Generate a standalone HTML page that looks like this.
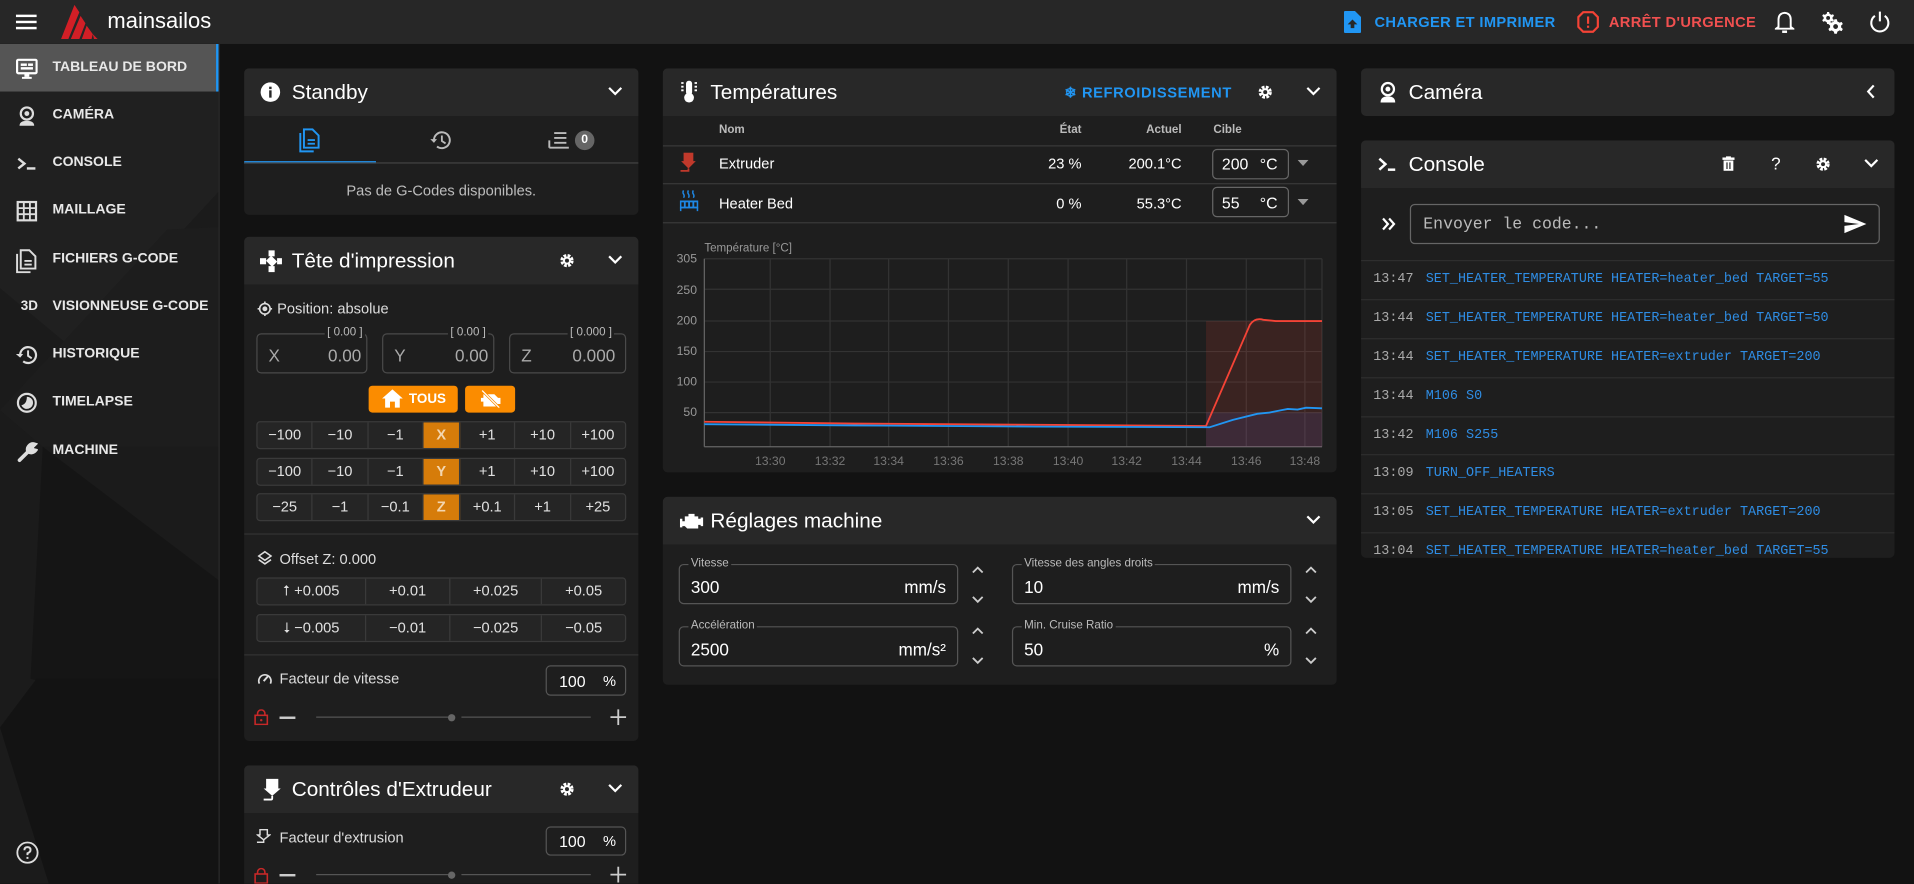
<!DOCTYPE html>
<html><head><meta charset="utf-8"><style>
*{box-sizing:border-box;margin:0;padding:0}
html,body{width:1914px;height:884px;overflow:hidden;background:#121212}
#w{position:absolute;left:0;top:0;width:1568px;height:724px;overflow:hidden;transform:scale(1.220663);transform-origin:0 0;font-family:"Liberation Sans",sans-serif;color:#fff;background:#121212}
.a{position:absolute}
.top{left:0;top:0;width:1568px;height:36px;background:#272727}
.side{left:0;top:36px;width:180px;height:688px;background:#1b1b1b;border-right:1px solid #2a2a2a;overflow:hidden}
.nav{position:absolute;left:0;width:177px;height:39px;font-size:11.5px;font-weight:bold;color:#e8e8e8;letter-spacing:0}
.nav span{position:absolute;left:43px;top:13px}
.nav svg{position:absolute;left:13px;top:11px}
.card{position:absolute;background:#1e1e1e;border-radius:4px;overflow:hidden}
.hd{position:absolute;left:0;top:0;right:0;height:39px;background:#282828}
.hd .t{position:absolute;left:39px;top:10px;font-size:17px}
.mut{color:#bdbdbd}
.fld{position:absolute;border:1px solid #555;border-radius:4px}
.grid{position:absolute;display:flex;border:1px solid #3a3a3a;border-radius:3px;overflow:hidden;background:#252525}
.grid div{flex:1;text-align:center;font-size:12px;line-height:20px;border-right:1px solid #3a3a3a;color:#e0e0e0}
.grid div:last-child{border-right:none}
.grid .o{background:#d67c0a;color:#f3d6b0;font-weight:bold;flex:0 0 30px}
.mono{font-family:"Liberation Mono",monospace}
.log{position:absolute;left:0;width:437px;height:32px;border-top:1px solid #2e2e2e;font-size:11px}
.log b{font-weight:normal;color:#aaa;position:absolute;left:10px;top:9px}
.log i{font-style:normal;color:#2f8de4;position:absolute;left:53px;top:9px}
.lbl{position:absolute;font-size:9.5px;color:#bbb;background:#1e1e1e;padding:0 2px}
</style></head><body><div id="w">
<!-- top bar -->
<div class="a top">
 <svg class="a" style="left:13px;top:11px" width="18" height="14"><rect y="1" width="17" height="2" fill="#fff"/><rect y="6" width="17" height="2" fill="#fff"/><rect y="11" width="17" height="2" fill="#fff"/></svg>
 <svg class="a" style="left:50px;top:4px" width="34" height="28"><polygon points="11,0 15,6 6,28 0,28" fill="#d21f26"/><polygon points="16,9 20,15 15,28 8,28" fill="#d21f26"/><polygon points="21,17 26,24 25,28 17,28" fill="#d21f26"/><polygon points="26,24 30,28 27,28" fill="#d21f26"/></svg>
 <div class="a" style="left:88px;top:7px;font-size:18px;color:#fff">mainsailos</div>
 <svg class="a" style="left:1101px;top:9px" width="14" height="18"><path d="M0 1Q0 0 1 0H9L14 5V17Q14 18 13 18H1Q0 18 0 17Z" fill="#2196f3"/><path d="M7 7L3 11H5.5V14H8.5V11H11Z" fill="#272727"/></svg>
 <div class="a" style="left:1126px;top:11px;font-size:12px;color:#2196f3;font-weight:bold;letter-spacing:.3px;white-space:nowrap">CHARGER ET IMPRIMER</div>
 <svg class="a" style="left:1292px;top:9px" width="18" height="18"><polygon points="5,1 13,1 17,5 17,13 13,17 5,17 1,13 1,5" fill="none" stroke="#f44336" stroke-width="1.8"/><rect x="8.1" y="4.5" width="1.8" height="6" fill="#f44336"/><rect x="8.1" y="12" width="1.8" height="1.8" fill="#f44336"/></svg>
 <div class="a" style="left:1318px;top:11px;font-size:12px;color:#f05050;font-weight:bold;letter-spacing:.3px;white-space:nowrap">ARRÊT D'URGENCE</div>
 <svg class="a" style="left:1454px;top:8px" width="16" height="20"><path d="M3 14V8Q3 3 8 2.5Q13 3 13 8V14L15 15.5H1Z" fill="none" stroke="#fff" stroke-width="1.6"/><rect x="6" y="17" width="4" height="2" fill="#fff"/></svg>
 <svg class="a" style="left:1492px;top:9px" width="20" height="19" viewBox="0 0 24 24"><path fill="#fff" d="M6.5 1L7 3Q8 3.3 8.7 4L10.6 3.4L11.6 5.1L10.1 6.5Q10.2 7.5 10.1 8L11.6 9.4L10.6 11.1L8.7 10.5Q8 11.2 7 11.5L6.5 13.5H4.5L4 11.5Q3 11.2 2.3 10.5L0.4 11.1L-0.6 9.4L0.9 8Q0.8 7 0.9 6.5L-0.6 5.1L0.4 3.4L2.3 4Q3 3.3 4 3L4.5 1ZM5.5 5.2A2 2 0 1 0 5.5 9.2A2 2 0 1 0 5.5 5.2Z" transform="translate(1 0)"/><path fill="#fff" d="M15.5 10L16.1 12.4Q17.3 12.8 18.2 13.6L20.5 12.9L21.7 15L19.9 16.7Q20.1 17.9 19.9 18.5L21.7 20.2L20.5 22.3L18.2 21.6Q17.3 22.4 16.1 22.8L15.5 25H13L12.4 22.8Q11.2 22.4 10.3 21.6L8 22.3L6.8 20.2L8.6 18.5Q8.4 17.3 8.6 16.7L6.8 15L8 12.9L10.3 13.6Q11.2 12.8 12.4 12.4L13 10ZM14.25 15.1A2.5 2.5 0 1 0 14.25 20.1A2.5 2.5 0 1 0 14.25 15.1Z" transform="translate(0 -1.5)"/></svg>
 <svg class="a" style="left:1531px;top:9px" width="18" height="18"><path d="M5 4A7 7 0 1 0 13 4" fill="none" stroke="#fff" stroke-width="1.7"/><rect x="8.2" y="0.5" width="1.7" height="8" fill="#fff"/></svg>
</div>
<!-- sidebar -->
<div class="a side">
 <svg class="a" style="left:0;top:0" width="180" height="688"><polygon points="0,0 180,0 180,120 60,250 0,200" fill="#202020"/><polygon points="0,300 137,152 180,150 180,330 35,330" fill="#1d1d1d"/><polygon points="35,330 180,440 180,560 25,520" fill="#151515"/><polygon points="0,560 30,520 180,520 180,688 40,688" fill="#131313"/></svg>
 <div class="nav" style="top:0;background:#555"><svg width="18" height="18"><rect x="1" y="2" width="16" height="11" rx="1" fill="none" stroke="#fff" stroke-width="1.8"/><rect x="4" y="5" width="5" height="2" fill="#fff"/><rect x="10" y="5" width="4" height="2" fill="#fff"/><rect x="4" y="8" width="10" height="2" fill="#fff"/><rect x="7" y="13" width="4" height="3" fill="#fff"/><rect x="5" y="16" width="8" height="1.6" fill="#fff"/></svg><span>TABLEAU DE BORD</span></div>
 <div class="a" style="left:177px;top:0;width:3px;height:39px;background:#2196f3"></div>
 <div class="nav" style="top:39px"><svg width="18" height="18"><circle cx="9" cy="7" r="5" fill="none" stroke="#ddd" stroke-width="1.8"/><circle cx="9" cy="7" r="2" fill="#ddd"/><path d="M3 17Q3 13 9 13Q15 13 15 17Z" fill="#ddd"/></svg><span>CAMÉRA</span></div>
 <div class="nav" style="top:78px"><svg width="18" height="18"><path d="M2 5L7 9L2 13" fill="none" stroke="#ddd" stroke-width="2"/><rect x="9" y="12" width="7" height="2" fill="#ddd"/></svg><span>CONSOLE</span></div>
 <div class="nav" style="top:117px"><svg width="18" height="18"><rect x="1.5" y="1.5" width="15" height="15" fill="none" stroke="#ddd" stroke-width="1.8"/><path d="M6.5 1.5V16.5M11.5 1.5V16.5M1.5 6.5H16.5M1.5 11.5H16.5" stroke="#ddd" stroke-width="1.5"/></svg><span>MAILLAGE</span></div>
 <div class="nav" style="top:157px"><svg width="18" height="20"><path d="M1 4V19H12" fill="none" stroke="#ddd" stroke-width="1.6"/><path d="M4 1H11L16 6V16H4Z" fill="none" stroke="#ddd" stroke-width="1.6"/><rect x="7" y="9" width="6" height="1.5" fill="#ddd"/><rect x="7" y="12" width="6" height="1.5" fill="#ddd"/></svg><span>FICHIERS G-CODE</span></div>
 <div class="nav" style="top:196px"><span style="left:17px;font-size:11px">3D</span><span>VISIONNEUSE G-CODE</span></div>
 <div class="nav" style="top:235px"><svg width="18" height="18"><path d="M3.5 9A6.5 6.5 0 1 1 6 14" fill="none" stroke="#ddd" stroke-width="1.8"/><path d="M0 8H6L3.5 11Z" fill="#ddd"/><path d="M10 5V9.5L13 11.5" fill="none" stroke="#ddd" stroke-width="1.6"/></svg><span>HISTORIQUE</span></div>
 <div class="nav" style="top:274px"><svg width="18" height="18"><circle cx="9" cy="9" r="7.3" fill="none" stroke="#ddd" stroke-width="1.8"/><path d="M9 4A5 5 0 1 1 4.5 11Q9 10 9 4Z" fill="#ddd"/></svg><span>TIMELAPSE</span></div>
 <div class="nav" style="top:314px"><svg width="18" height="18"><path d="M3 16L10 9M10 9A4.5 4.5 0 0 1 15.5 3L13 5.5L14 7.5L16 8A4.5 4.5 0 0 1 10 9" fill="#ddd" stroke="#ddd" stroke-width="3" stroke-linecap="round"/></svg><span>MACHINE</span></div>
 <svg class="a" style="left:13px;top:653px" width="19" height="19"><circle cx="9.5" cy="9.5" r="8.3" fill="none" stroke="#ddd" stroke-width="1.5"/><path d="M7 7.5Q7 5 9.5 5Q12 5 12 7.3Q12 9 9.5 10V11.5" fill="none" stroke="#ddd" stroke-width="1.6"/><rect x="8.7" y="13" width="1.6" height="1.6" fill="#ddd"/></svg>
</div>

<!-- Standby -->
<div class="card" style="left:200px;top:56px;width:323px;height:120px">
 <div class="hd"><svg class="a" style="left:13px;top:11px" width="17" height="17"><circle cx="8.5" cy="8.5" r="8" fill="#fff"/><rect x="7.5" y="7" width="2" height="6" fill="#282828"/><rect x="7.5" y="4" width="2" height="2" fill="#282828"/></svg><div class="t">Standby</div><svg class="a" style="left:298px;top:15px" width="12" height="8"><path d="M1 1L6 6L11 1" fill="none" stroke="#fff" stroke-width="1.8"/></svg></div>
 <svg class="a" style="left:45px;top:49px" width="18" height="20"><path d="M1 4V19H12" fill="none" stroke="#2196f3" stroke-width="1.6"/><path d="M4 1H11L16 6V16H4Z" fill="none" stroke="#2196f3" stroke-width="1.6"/><rect x="7" y="9" width="6" height="1.5" fill="#2196f3"/><rect x="7" y="12" width="6" height="1.5" fill="#2196f3"/></svg>
 <svg class="a" style="left:152px;top:50px" width="18" height="18"><path d="M3.5 9A6.5 6.5 0 1 1 6 14" fill="none" stroke="#bbb" stroke-width="1.6"/><path d="M0.5 8H6L3.5 11Z" fill="#bbb"/><path d="M10 5V9.5L13 11.5" fill="none" stroke="#bbb" stroke-width="1.5"/></svg>
 <svg class="a" style="left:249px;top:51px" width="18" height="16"><path d="M5 2H15M5 6H15M5 10H15M1 14H17" stroke="#bbb" stroke-width="1.6"/><path d="M1 8V14" stroke="#bbb" stroke-width="1.6"/></svg>
 <div class="a" style="left:271px;top:51px;width:16px;height:16px;border-radius:8px;background:#666;font-size:10px;font-weight:bold;text-align:center;line-height:16px">0</div>
 <div class="a" style="left:0;top:76px;width:108px;height:2px;background:#2196f3"></div>
 <div class="a" style="left:0;top:77px;width:323px;height:1px;background:#444"></div>
 <div class="a mut" style="left:0;top:93px;width:323px;text-align:center;font-size:12px">Pas de G-Codes disponibles.</div>
</div>

<!-- Tete -->
<div class="card" style="left:200px;top:194px;width:323px;height:413px">
 <div class="hd"><svg class="a" style="left:13px;top:11px" width="18" height="18"><rect x="7" y="0" width="5" height="5" fill="#fff"/><rect x="0" y="6.5" width="5" height="5" fill="#fff"/><rect x="14" y="6.5" width="4" height="5" fill="#fff"/><rect x="7" y="13" width="5" height="5" fill="#fff"/><rect x="6" y="6" width="7" height="6" fill="#fff" transform="rotate(45 9.5 9)"/></svg><div class="t">Tête d'impression</div>
 <svg class="a" style="left:258px;top:13px" width="13" height="13" viewBox="0 0 24 24"><circle cx="12" cy="12" r="7.5" fill="none" stroke="#fff" stroke-width="5" stroke-dasharray="4 2"/><circle cx="12" cy="12" r="6" fill="#fff"/><circle cx="12" cy="12" r="3" fill="#282828"/></svg>
 <svg class="a" style="left:298px;top:15px" width="12" height="8"><path d="M1 1L6 6L11 1" fill="none" stroke="#fff" stroke-width="1.8"/></svg></div>
 <svg class="a" style="left:11px;top:53px" width="12" height="12"><circle cx="6" cy="6" r="4.3" fill="none" stroke="#ddd" stroke-width="1.3"/><circle cx="6" cy="6" r="2" fill="#ddd"/><path d="M6 0V2M6 10V12M0 6H2M10 6H12" stroke="#ddd" stroke-width="1.3"/></svg>
 <div class="a" style="left:27px;top:52px;font-size:12px;color:#ddd">Position: absolue</div>
 <div class="fld" style="left:10px;top:79px;width:91px;height:33px;border-color:#4a4a4a"></div><div class="lbl" style="left:66px;top:73px">[ 0.00 ]</div><div class="a" style="left:20px;top:89px;font-size:14px;color:#aaa">X</div><div class="a" style="left:60px;top:89px;width:36px;text-align:right;font-size:14px;color:#aaa">0.00</div>
 <div class="fld" style="left:113px;top:79px;width:92px;height:33px;border-color:#4a4a4a"></div><div class="lbl" style="left:167px;top:73px">[ 0.00 ]</div><div class="a" style="left:123px;top:89px;font-size:14px;color:#aaa">Y</div><div class="a" style="left:160px;top:89px;width:40px;text-align:right;font-size:14px;color:#aaa">0.00</div>
 <div class="fld" style="left:217px;top:79px;width:96px;height:33px;border-color:#4a4a4a"></div><div class="lbl" style="left:265px;top:73px">[ 0.000 ]</div><div class="a" style="left:227px;top:89px;font-size:14px;color:#aaa">Z</div><div class="a" style="left:260px;top:89px;width:44px;text-align:right;font-size:14px;color:#aaa">0.000</div>
 <div class="a" style="left:102px;top:122px;width:73px;height:22px;background:#fb8c00;border-radius:3px"><svg class="a" style="left:11px;top:3px" width="17" height="15"><path d="M8.5 0L17 7.5H14.5V15H10.5V10H6.5V15H2.5V7.5H0Z" fill="#fff"/></svg><div class="a" style="left:33px;top:5px;font-size:11px;font-weight:bold">TOUS</div></div>
 <div class="a" style="left:181px;top:122px;width:41px;height:22px;background:#fb8c00;border-radius:3px"><svg class="a" style="left:12px;top:3px" width="18" height="15"><path d="M3 4H12L15 7H17V12H15L13 14H3V10H1V7H3Z" fill="#fff"/><path d="M2 1L16 15" stroke="#fb8c00" stroke-width="2.2"/><path d="M2 1L16 15" stroke="#fff" stroke-width="1"/></svg></div>
 <div class="grid" style="left:10px;top:151px;width:303px;height:23px"><div>−100</div><div>−10</div><div>−1</div><div class="o">X</div><div>+1</div><div>+10</div><div>+100</div></div>
 <div class="grid" style="left:10px;top:181px;width:303px;height:23px"><div>−100</div><div>−10</div><div>−1</div><div class="o">Y</div><div>+1</div><div>+10</div><div>+100</div></div>
 <div class="grid" style="left:10px;top:210px;width:303px;height:23px"><div>−25</div><div>−1</div><div>−0.1</div><div class="o">Z</div><div>+0.1</div><div>+1</div><div>+25</div></div>
 <div class="a" style="left:0;top:243px;width:323px;height:1px;background:#333"></div>
 <svg class="a" style="left:11px;top:257px" width="12" height="12"><path d="M6 1L11 4.5L6 8L1 4.5Z" fill="none" stroke="#ddd" stroke-width="1.3"/><path d="M1 7.5L6 11L11 7.5" fill="none" stroke="#ddd" stroke-width="1.3"/></svg>
 <div class="a" style="left:29px;top:257px;font-size:12px;color:#ddd">Offset Z: 0.000</div>
 <div class="grid" style="left:10px;top:279px;width:303px;height:23px"><div style="flex:1.3">⭡ +0.005</div><div>+0.01</div><div style="flex:1.1">+0.025</div><div>+0.05</div></div>
 <div class="grid" style="left:10px;top:309px;width:303px;height:23px"><div style="flex:1.3">⭣ −0.005</div><div>−0.01</div><div style="flex:1.1">−0.025</div><div>−0.05</div></div>
 <div class="a" style="left:0;top:342px;width:323px;height:1px;background:#333"></div>
 <svg class="a" style="left:11px;top:356px" width="12" height="11"><path d="M1.5 10A5 5 0 1 1 10.5 10" fill="none" stroke="#ddd" stroke-width="1.4"/><path d="M5 8L8.5 4" stroke="#ddd" stroke-width="1.6"/></svg>
 <div class="a" style="left:29px;top:355px;font-size:12px;color:#ddd">Facteur de vitesse</div>
 <div class="fld" style="left:247px;top:351px;width:66px;height:25px"></div><div class="a" style="left:258px;top:357px;font-size:13px">100</div><div class="a" style="left:294px;top:357px;font-size:12px">%</div>
 <svg class="a" style="left:8px;top:387px" width="12" height="13"><rect x="1" y="5" width="10" height="7.5" fill="none" stroke="#c62828" stroke-width="1.3"/><path d="M3 5V3.5A3 3 0 0 1 9 3.5V5" fill="none" stroke="#c62828" stroke-width="1.3"/><circle cx="6" cy="9" r="1" fill="#c62828"/></svg>
 <div class="a" style="left:29px;top:393px;width:13px;height:1.6px;background:#ccc"></div>
 <div class="a" style="left:59px;top:393px;width:108px;height:1.4px;background:#555"></div><div class="a" style="left:167px;top:391px;width:6px;height:6px;border-radius:3px;background:#666"></div><div class="a" style="left:178px;top:393px;width:106px;height:1.4px;background:#555"></div>
 <svg class="a" style="left:300px;top:387px" width="13" height="13"><path d="M6.5 0V13M0 6.5H13" stroke="#ccc" stroke-width="1.5"/></svg>
</div>

<!-- Extrudeur -->
<div class="card" style="left:200px;top:627px;width:323px;height:110px">
 <div class="hd"><svg class="a" style="left:15px;top:11px" width="16" height="19"><path d="M3 0H13V8H15L8 14L1 8H3Z" fill="#fff"/><path d="M8 14V16Q8 17 7 17H1" fill="none" stroke="#fff" stroke-width="1.5"/></svg><div class="t">Contrôles d'Extrudeur</div>
 <svg class="a" style="left:258px;top:13px" width="13" height="13" viewBox="0 0 24 24"><circle cx="12" cy="12" r="7.5" fill="none" stroke="#fff" stroke-width="5" stroke-dasharray="4 2"/><circle cx="12" cy="12" r="6" fill="#fff"/><circle cx="12" cy="12" r="3" fill="#282828"/></svg>
 <svg class="a" style="left:298px;top:15px" width="12" height="8"><path d="M1 1L6 6L11 1" fill="none" stroke="#fff" stroke-width="1.8"/></svg></div>
 <svg class="a" style="left:10px;top:52px" width="12" height="14"><path d="M3 0.7H9V5H11L6 9L1 5H3Z" fill="none" stroke="#ddd" stroke-width="1.2"/><path d="M6 9V11H0.5" fill="none" stroke="#ddd" stroke-width="1.2"/></svg>
 <div class="a" style="left:29px;top:52px;font-size:12px;color:#ddd">Facteur d'extrusion</div>
 <div class="fld" style="left:247px;top:50px;width:66px;height:24px"></div><div class="a" style="left:258px;top:55px;font-size:13px">100</div><div class="a" style="left:294px;top:55px;font-size:12px">%</div>
 <svg class="a" style="left:8px;top:84px" width="12" height="13"><rect x="1" y="5" width="10" height="7.5" fill="none" stroke="#c62828" stroke-width="1.3"/><path d="M3 5V3.5A3 3 0 0 1 9 3.5V5" fill="none" stroke="#c62828" stroke-width="1.3"/></svg>
 <div class="a" style="left:29px;top:89px;width:13px;height:1.6px;background:#ccc"></div>
 <div class="a" style="left:59px;top:89px;width:108px;height:1.4px;background:#555"></div><div class="a" style="left:167px;top:87px;width:6px;height:6px;border-radius:3px;background:#666"></div><div class="a" style="left:178px;top:89px;width:106px;height:1.4px;background:#555"></div>
 <svg class="a" style="left:300px;top:83px" width="13" height="13"><path d="M6.5 0V13M0 6.5H13" stroke="#ccc" stroke-width="1.5"/></svg>
</div>

<!-- Temperatures -->
<div class="card" style="left:543px;top:56px;width:552px;height:331px">
 <div class="hd"><svg class="a" style="left:15px;top:10px" width="16" height="19"><rect x="4" y="0" width="5" height="12" rx="2.5" fill="#fff"/><circle cx="6.5" cy="14" r="4" fill="#fff"/><path d="M0 2H2M0 5H2M0 8H2M11 2H13M11 5H13M11 8H13" stroke="#fff" stroke-width="1.5"/></svg><div class="t">Températures</div>
 <div class="a" style="left:329px;top:13px;font-size:12px;color:#2196f3;font-weight:bold;letter-spacing:.5px;white-space:nowrap">❄ REFROIDISSEMENT</div>
 <svg class="a" style="left:487px;top:13px" width="13" height="13" viewBox="0 0 24 24"><circle cx="12" cy="12" r="7.5" fill="none" stroke="#fff" stroke-width="5" stroke-dasharray="4 2"/><circle cx="12" cy="12" r="6" fill="#fff"/><circle cx="12" cy="12" r="3" fill="#282828"/></svg>
 <svg class="a" style="left:527px;top:15px" width="12" height="8"><path d="M1 1L6 6L11 1" fill="none" stroke="#fff" stroke-width="1.8"/></svg></div>
 <div class="a" style="left:46px;top:45px;font-size:9.5px;font-weight:bold;color:#bbb">Nom</div>
 <div class="a" style="left:300px;top:45px;width:43px;text-align:right;font-size:9.5px;font-weight:bold;color:#bbb">État</div>
 <div class="a" style="left:380px;top:45px;width:45px;text-align:right;font-size:9.5px;font-weight:bold;color:#bbb">Actuel</div>
 <div class="a" style="left:451px;top:45px;font-size:9.5px;font-weight:bold;color:#bbb">Cible</div>
 <div class="a" style="left:0;top:63px;width:552px;height:1px;background:#3a3a3a"></div>
 <svg class="a" style="left:14px;top:69px" width="14" height="19"><path d="M3 0H11V7H13L7 13L1 7H3Z" fill="#c0392b"/><path d="M7 13V15H0.5" fill="none" stroke="#c0392b" stroke-width="1.5"/></svg>
 <div class="a" style="left:46px;top:71px;font-size:12px">Extruder</div>
 <div class="a" style="left:300px;top:71px;width:43px;text-align:right;font-size:12px">23 %</div>
 <div class="a" style="left:370px;top:71px;width:55px;text-align:right;font-size:12px">200.1°C</div>
 <div class="fld" style="left:450px;top:66px;width:63px;height:25px;border-color:#666"></div><div class="a" style="left:458px;top:71px;font-size:13px">200</div><div class="a" style="left:489px;top:71px;font-size:13px">°C</div>
 <svg class="a" style="left:520px;top:75px" width="9" height="5"><path d="M0 0H9L4.5 5Z" fill="#999"/></svg>
 <div class="a" style="left:0;top:94px;width:552px;height:1px;background:#3a3a3a"></div>
 <svg class="a" style="left:14px;top:99px" width="15" height="19"><path d="M3 1Q2 2.5 3 4Q4 5.5 3 7M7 1Q6 2.5 7 4Q8 5.5 7 7M11 1Q10 2.5 11 4Q12 5.5 11 7" fill="none" stroke="#1e88e5" stroke-width="1.2"/><rect x="0.5" y="10" width="14" height="5" fill="none" stroke="#1e88e5" stroke-width="1.5"/><path d="M4 10V15M7.5 10V15M11 10V15M0.5 15V18M14.5 15V18" stroke="#1e88e5" stroke-width="1.5"/></svg>
 <div class="a" style="left:46px;top:104px;font-size:12px">Heater Bed</div>
 <div class="a" style="left:300px;top:104px;width:43px;text-align:right;font-size:12px">0 %</div>
 <div class="a" style="left:370px;top:104px;width:55px;text-align:right;font-size:12px">55.3°C</div>
 <div class="fld" style="left:450px;top:97px;width:63px;height:25px;border-color:#666"></div><div class="a" style="left:458px;top:103px;font-size:13px">55</div><div class="a" style="left:489px;top:103px;font-size:13px">°C</div>
 <svg class="a" style="left:520px;top:107px" width="9" height="5"><path d="M0 0H9L4.5 5Z" fill="#999"/></svg>
 <div class="a" style="left:0;top:126px;width:552px;height:1px;background:#3a3a3a"></div>
 <svg class="a" style="left:0;top:127px" width="552" height="204" font-family="Liberation Sans" font-size="10" fill="#999">
  <g transform="translate(-543,-183)">
  <text x="577" y="206" font-size="9.5" fill="#999">Température [°C]</text>
  <g stroke="#333" stroke-width="1">
   <line x1="577" y1="212" x2="1083" y2="212"/><line x1="577" y1="237" x2="1083" y2="237"/><line x1="577" y1="263" x2="1083" y2="263"/><line x1="577" y1="288" x2="1083" y2="288"/><line x1="577" y1="313" x2="1083" y2="313"/><line x1="577" y1="338" x2="1083" y2="338"/>
   <line x1="631" y1="212" x2="631" y2="366"/><line x1="680" y1="212" x2="680" y2="366"/><line x1="728" y1="212" x2="728" y2="366"/><line x1="777" y1="212" x2="777" y2="366"/><line x1="826" y1="212" x2="826" y2="366"/><line x1="875" y1="212" x2="875" y2="366"/><line x1="923" y1="212" x2="923" y2="366"/><line x1="972" y1="212" x2="972" y2="366"/><line x1="1021" y1="212" x2="1021" y2="366"/><line x1="1069" y1="212" x2="1069" y2="366"/><line x1="1083" y1="212" x2="1083" y2="366"/>
  </g>
  <line x1="577" y1="212" x2="577" y2="366" stroke="#666"/><line x1="577" y1="366" x2="1083" y2="366" stroke="#666"/>
  <rect x="988" y="263" width="95" height="103" fill="#f44336" fill-opacity="0.13"/>
  <rect x="988" y="338" width="95" height="28" fill="#5a6cff" fill-opacity="0.1"/>
  <g text-anchor="end" font-size="10" fill="#999"><text x="571" y="215">305</text><text x="571" y="241">250</text><text x="571" y="266">200</text><text x="571" y="291">150</text><text x="571" y="316">100</text><text x="571" y="341">50</text></g>
  <g text-anchor="middle" font-size="10" fill="#777"><text x="631" y="381">13:30</text><text x="680" y="381">13:32</text><text x="728" y="381">13:34</text><text x="777" y="381">13:36</text><text x="826" y="381">13:38</text><text x="875" y="381">13:40</text><text x="923" y="381">13:42</text><text x="972" y="381">13:44</text><text x="1021" y="381">13:46</text><text x="1069" y="381">13:48</text></g>
  <path d="M577 345.5L700 347L850 348L988 349L1024 266Q1028 260 1035 262L1045 263L1083 263" fill="none" stroke="#f44336" stroke-width="1.5"/>
  <path d="M577 347.5L700 348.5L850 349.5L991 350L1010 344L1030 339L1040 338L1050 336L1055 335L1063 335.5L1070 334L1083 334.5" fill="none" stroke="#2196f3" stroke-width="1.5"/>
  </g>
 </svg>
</div>

<!-- Reglages -->
<div class="card" style="left:543px;top:407px;width:552px;height:154px">
 <div class="hd"><svg class="a" style="left:14px;top:13px" width="20" height="14"><path d="M4 3H7V1H12V3H15V5H17V4H19V11H17V10H15V13H6L4 11H2V12H0V5H2V7H4Z" fill="#fff"/></svg><div class="t">Réglages machine</div>
 <svg class="a" style="left:527px;top:15px" width="12" height="8"><path d="M1 1L6 6L11 1" fill="none" stroke="#fff" stroke-width="1.8"/></svg></div>
 <div class="fld" style="left:13px;top:55px;width:229px;height:33px;border-color:#555"></div><div class="lbl" style="left:21px;top:49px">Vitesse</div><div class="a" style="left:23px;top:66px;font-size:14px">300</div><div class="a" style="left:190px;top:66px;width:42px;text-align:right;font-size:14px">mm/s</div>
 <div class="fld" style="left:286px;top:55px;width:229px;height:33px;border-color:#555"></div><div class="lbl" style="left:294px;top:49px">Vitesse des angles droits</div><div class="a" style="left:296px;top:66px;font-size:14px">10</div><div class="a" style="left:463px;top:66px;width:42px;text-align:right;font-size:14px">mm/s</div>
 <div class="fld" style="left:13px;top:106px;width:229px;height:33px;border-color:#555"></div><div class="lbl" style="left:21px;top:100px">Accélération</div><div class="a" style="left:23px;top:117px;font-size:14px">2500</div><div class="a" style="left:180px;top:117px;width:52px;text-align:right;font-size:14px">mm/s²</div>
 <div class="fld" style="left:286px;top:106px;width:229px;height:33px;border-color:#555"></div><div class="lbl" style="left:294px;top:100px">Min. Cruise Ratio</div><div class="a" style="left:296px;top:117px;font-size:14px">50</div><div class="a" style="left:463px;top:117px;width:42px;text-align:right;font-size:14px">%</div>
 <svg class="a" style="left:252px;top:55px" width="12" height="35"><path d="M2 7L6 3L10 7M2 27L6 31L10 27" fill="none" stroke="#ccc" stroke-width="1.5"/></svg>
 <svg class="a" style="left:525px;top:55px" width="12" height="35"><path d="M2 7L6 3L10 7M2 27L6 31L10 27" fill="none" stroke="#ccc" stroke-width="1.5"/></svg>
 <svg class="a" style="left:252px;top:105px" width="12" height="35"><path d="M2 7L6 3L10 7M2 27L6 31L10 27" fill="none" stroke="#ccc" stroke-width="1.5"/></svg>
 <svg class="a" style="left:525px;top:105px" width="12" height="35"><path d="M2 7L6 3L10 7M2 27L6 31L10 27" fill="none" stroke="#ccc" stroke-width="1.5"/></svg>
</div>

<!-- Camera -->
<div class="card" style="left:1115px;top:56px;width:437px;height:39px;background:#282828">
 <svg class="a" style="left:14px;top:10px" width="16" height="19"><circle cx="8" cy="7" r="5" fill="none" stroke="#fff" stroke-width="1.8"/><circle cx="8" cy="7" r="2" fill="#fff"/><path d="M2 18Q2 13 8 13Q14 13 14 18Z" fill="#fff"/></svg>
 <div class="a" style="left:39px;top:10px;font-size:17px">Caméra</div>
 <svg class="a" style="left:414px;top:13px" width="8" height="12"><path d="M6 1L1.5 6L6 11" fill="none" stroke="#fff" stroke-width="1.8"/></svg>
</div>

<!-- Console -->
<div class="card" style="left:1115px;top:115px;width:437px;height:342px">
 <div class="hd"><svg class="a" style="left:14px;top:13px" width="18" height="14"><path d="M1 2L6 6.5L1 11" fill="none" stroke="#fff" stroke-width="2"/><rect x="8" y="10" width="6" height="2" fill="#fff"/></svg><div class="t">Console</div>
 <svg class="a" style="left:296px;top:13px" width="10" height="12"><rect x="0" y="1" width="10" height="2" fill="#fff"/><rect x="3" y="0" width="4" height="1.5" fill="#fff"/><path d="M1 3.5H9V12H1Z" fill="#fff"/><path d="M3.8 5V10.5M6.2 5V10.5" stroke="#282828" stroke-width="1"/></svg>
 <div class="a" style="left:336px;top:11px;font-size:14px">?</div>
 <svg class="a" style="left:372px;top:13px" width="13" height="13" viewBox="0 0 24 24"><circle cx="12" cy="12" r="7.5" fill="none" stroke="#fff" stroke-width="5" stroke-dasharray="4 2"/><circle cx="12" cy="12" r="6" fill="#fff"/><circle cx="12" cy="12" r="3" fill="#282828"/></svg>
 <svg class="a" style="left:412px;top:15px" width="12" height="8"><path d="M1 1L6 6L11 1" fill="none" stroke="#fff" stroke-width="1.8"/></svg></div>
 <svg class="a" style="left:17px;top:63px" width="12" height="11"><path d="M1 1L5 5.5L1 10M6 1L10 5.5L6 10" fill="none" stroke="#fff" stroke-width="1.8"/></svg>
 <div class="fld" style="left:40px;top:52px;width:385px;height:33px;border-color:#666"></div>
 <div class="a mono" style="left:51px;top:62px;font-size:13.5px;color:#bbb">Envoyer le code...</div>
 <svg class="a" style="left:395px;top:60px" width="20" height="17"><path d="M1 1L19 8.5L1 16L1 10L13 8.5L1 7Z" fill="#fff"/></svg>
 <div class="mono">
 <div class="log" style="top:98px"><b>13:47</b><i>SET_HEATER_TEMPERATURE HEATER=heater_bed TARGET=55</i></div>
 <div class="log" style="top:130px"><b>13:44</b><i>SET_HEATER_TEMPERATURE HEATER=heater_bed TARGET=50</i></div>
 <div class="log" style="top:162px"><b>13:44</b><i>SET_HEATER_TEMPERATURE HEATER=extruder TARGET=200</i></div>
 <div class="log" style="top:194px"><b>13:44</b><i>M106 S0</i></div>
 <div class="log" style="top:226px"><b>13:42</b><i>M106 S255</i></div>
 <div class="log" style="top:257px"><b>13:09</b><i>TURN_OFF_HEATERS</i></div>
 <div class="log" style="top:289px"><b>13:05</b><i>SET_HEATER_TEMPERATURE HEATER=extruder TARGET=200</i></div>
 <div class="log" style="top:321px"><b>13:04</b><i>SET_HEATER_TEMPERATURE HEATER=heater_bed TARGET=55</i></div>
 </div>
</div>
</div></body></html>
